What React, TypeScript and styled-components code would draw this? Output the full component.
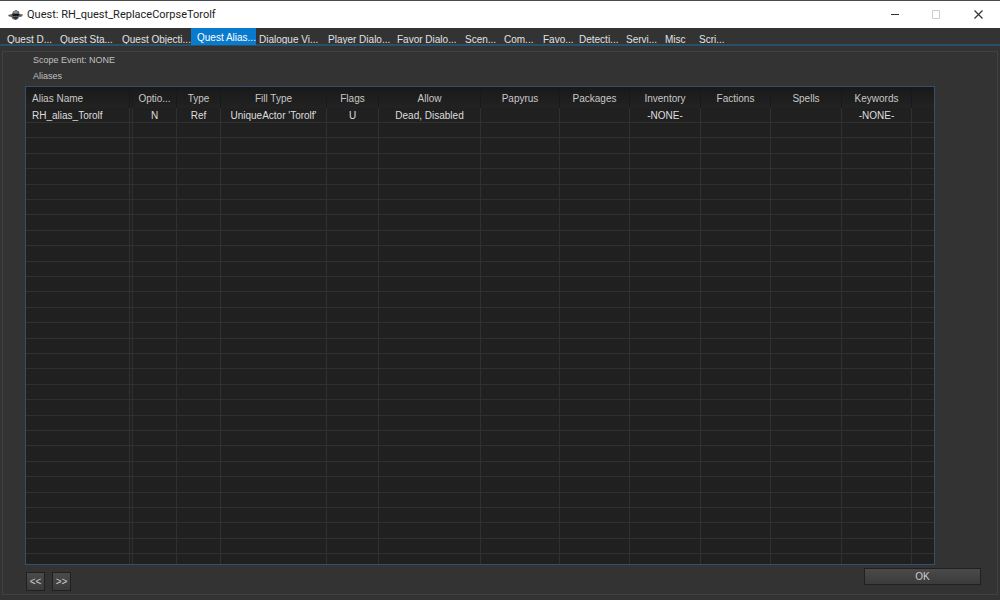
import React, { useState } from "react";
import styled, { createGlobalStyle, css } from "styled-components";

const GlobalStyle = createGlobalStyle`
  * { box-sizing: border-box; }
  body {
    margin: 0;
    background: #333333;
    color: #c8c8c8;
    font: 10px/14px "Liberation Sans", Arial, sans-serif;
  }
  button { font: inherit; color: inherit; padding: 0; }
`;

const Window = styled.div`
  display: flex;
  flex-direction: column;
  min-height: 100vh;
  border-top: 1px solid #4b4b4d;
`;

const TitleBar = styled.header`
  display: flex;
  align-items: center;
  height: 27px;
  padding-left: 8px;
  background: #ffffff;
  color: #222222;
`;

const Title = styled.h1`
  flex: 1;
  margin: 0 0 0 4px;
  padding-top: 1px;
  font: 400 11px/16px Roboto, "Noto Sans", sans-serif;
`;

const CaptionButton = styled.button`
  display: flex;
  align-items: center;
  justify-content: center;
  width: 42px;
  height: 27px;
  border: 0;
  background: transparent;
`;

const TabStrip = styled.nav`
  display: flex;
  height: 18px;
  padding-left: 4px;
  border-bottom: 2px solid #2a5068;
`;

const Tab = styled.button<{ $width: number; $active: boolean }>`
  display: flex;
  flex: none;
  align-items: flex-start;
  width: ${(p) => p.$width}px;
  height: 16px;
  padding: 5px 0 0 3px;
  overflow: hidden;
  border: 0;
  background: transparent;
  color: #e2e2e2;
  line-height: 14px;
  text-align: left;
  white-space: nowrap;
  ${(p) =>
    p.$active &&
    css`
      height: 17px;
      padding: 3px 0 0 6px;
      background: #087bcf;
      color: #ffffff;
    `}
`;

const Page = styled.main`
  display: flex;
  flex: 1;
  flex-direction: column;
  margin: 5px 2px 0;
  padding: 1px 16px 2px 22px;
  border: 1px solid #414141;
`;

const Caption = styled.p`
  margin: 0 0 2px 8px;
  color: #c0c0c0;
  font-size: 9px;
`;

const ListFrame = styled.div`
  margin: 1px 46px 0 0;
  height: 479px;
  overflow: hidden;
  border: 1px solid #34506e;
  background: #202020;
`;

const AliasTable = styled.table`
  width: 100%;
  table-layout: fixed;
  border-collapse: separate;
  border-spacing: 0;
`;

const HeadCell = styled.th<{ $left: boolean }>`
  height: 21px;
  padding: ${(p) => (p.$left ? "2px 5px 0 6px" : "2px 5px 0")};
  border-right: 1px solid #191919;
  background: linear-gradient(#191919, #222222);
  font-weight: 400;
  text-align: ${(p) => (p.$left ? "left" : "center")};
  white-space: nowrap;
  &:last-child { border-right: 0; }
`;

const Row = styled.tr`
  height: 15px;
  &:nth-child(5n + 3), &:nth-child(5n) { height: 16px; }
`;

const Cell = styled.td<{ $left: boolean }>`
  padding: ${(p) => (p.$left ? "2px 5px 0 6px" : "2px 5px 0")};
  border-right: 1px solid #303030;
  border-bottom: 1px solid #303030;
  color: #dedede;
  line-height: 12px;
  text-align: ${(p) => (p.$left ? "left" : "center")};
  white-space: nowrap;
  &:last-child { border-right: 0; }
`;

const Footer = styled.footer`
  display: flex;
  align-items: flex-start;
  gap: 7px;
  margin: 3px 0 0 1px;
`;

const PushButton = styled.button<{ $wide?: boolean }>`
  width: ${(p) => (p.$wide ? 117 : 19)}px;
  height: ${(p) => (p.$wide ? 17 : 19)}px;
  margin-top: ${(p) => (p.$wide ? 0 : 4)}px;
  margin-left: ${(p) => (p.$wide ? "auto" : 0)};
  padding-top: 1px;
  border: 1px solid #202020;
  background: linear-gradient(#4a4a4a, #3b3b3b);
  color: #cccccc;
  line-height: 14px;
`;

const BottomEdge = styled.div`
  height: 5px;
`;

const tabs = [
  { label: "Quest D...", width: 53 },
  { label: "Quest Sta...", width: 62 },
  { label: "Quest Objecti...", width: 72 },
  { label: "Quest Alias...", width: 65 },
  { label: "Dialogue Vi...", width: 69 },
  { label: "Player Dialo...", width: 69 },
  { label: "Favor Dialo...", width: 68 },
  { label: "Scen...", width: 39 },
  { label: "Com...", width: 39 },
  { label: "Favo...", width: 36 },
  { label: "Detecti...", width: 47 },
  { label: "Servi...", width: 39 },
  { label: "Misc", width: 34 },
  { label: "Scri...", width: 40 },
];

const columns = [
  { label: "Alias Name", width: 104, value: "RH_alias_Torolf" },
  { label: "", width: 3, value: "" },
  { label: "Optio...", width: 44, value: "N" },
  { label: "Type", width: 44, value: "Ref" },
  { label: "Fill Type", width: 106, value: "UniqueActor 'Torolf'" },
  { label: "Flags", width: 52, value: "U" },
  { label: "Allow", width: 102, value: "Dead, Disabled" },
  { label: "Papyrus", width: 79, value: "" },
  { label: "Packages", width: 70, value: "" },
  { label: "Inventory", width: 71, value: "-NONE-" },
  { label: "Factions", width: 70, value: "" },
  { label: "Spells", width: 71, value: "" },
  { label: "Keywords", width: 70, value: "-NONE-" },
  { label: "", width: 22, value: "" },
];

const ROW_COUNT = 30;

export default function App() {
  const [active, setActive] = useState(3);
  return (
    <>
      <GlobalStyle />
      <Window>
        <TitleBar>
          <svg width="15" height="12" viewBox="0 0 15 12" aria-hidden="true">
            <path d="M0 6l4-1 1-2.500 3-1.500 3 1.500.5 2.500 3.500.500-1 2-3 .5-1 2-2.500 1-3-1-1-2-2.500-.500z" fill="#596063" />
            <path d="M4 5h7.500l-1 2H5z" fill="#15191a" />
            <path d="M5.500 3l2.500-1 2 1-.5 1H6z" fill="#8b979b" />
            <path d="M5 8h5l-2 2.500z" fill="#24292a" />
          </svg>
          <Title>Quest: RH_quest_ReplaceCorpseTorolf</Title>
          <CaptionButton aria-label="Minimize">
            <svg width="10" height="10"><path d="M1 4.5h8" stroke="#333" /></svg>
          </CaptionButton>
          <CaptionButton aria-label="Maximize" disabled>
            <svg width="10" height="10"><path d="M.5 .5h7v8h-7z" fill="none" stroke="#ccc" /></svg>
          </CaptionButton>
          <CaptionButton aria-label="Close">
            <svg width="10" height="10"><path d="M.5 .5l8 8M8.500 .5l-8 8" stroke="#333" strokeWidth="1.200" /></svg>
          </CaptionButton>
        </TitleBar>
        <TabStrip role="tablist">
          {tabs.map((tab, i) => (
            <Tab
              key={tab.label}
              role="tab"
              aria-selected={i === active}
              $width={tab.width}
              $active={i === active}
              onClick={() => setActive(i)}
            >
              {tab.label}
            </Tab>
          ))}
        </TabStrip>
        <Page>
          <Caption>Scope Event: NONE</Caption>
          <Caption>Aliases</Caption>
          <ListFrame>
            <AliasTable>
              <colgroup>
                {columns.map((c, i) => (
                  <col key={i} width={c.width} />
                ))}
              </colgroup>
              <thead>
                <tr>
                  {columns.map((c, i) => (
                    <HeadCell key={i} $left={i === 0}>{c.label}</HeadCell>
                  ))}
                </tr>
              </thead>
              <tbody>
                {Array.from({ length: ROW_COUNT }, (_, r) => (
                  <Row key={r}>
                    {columns.map((c, i) => (
                      <Cell key={i} $left={i === 0}>{r === 0 ? c.value : ""}</Cell>
                    ))}
                  </Row>
                ))}
              </tbody>
            </AliasTable>
          </ListFrame>
          <Footer>
            <PushButton aria-label="Previous">&lt;&lt;</PushButton>
            <PushButton aria-label="Next">&gt;&gt;</PushButton>
            <PushButton $wide>OK</PushButton>
          </Footer>
        </Page>
        <BottomEdge />
      </Window>
    </>
  );
}
